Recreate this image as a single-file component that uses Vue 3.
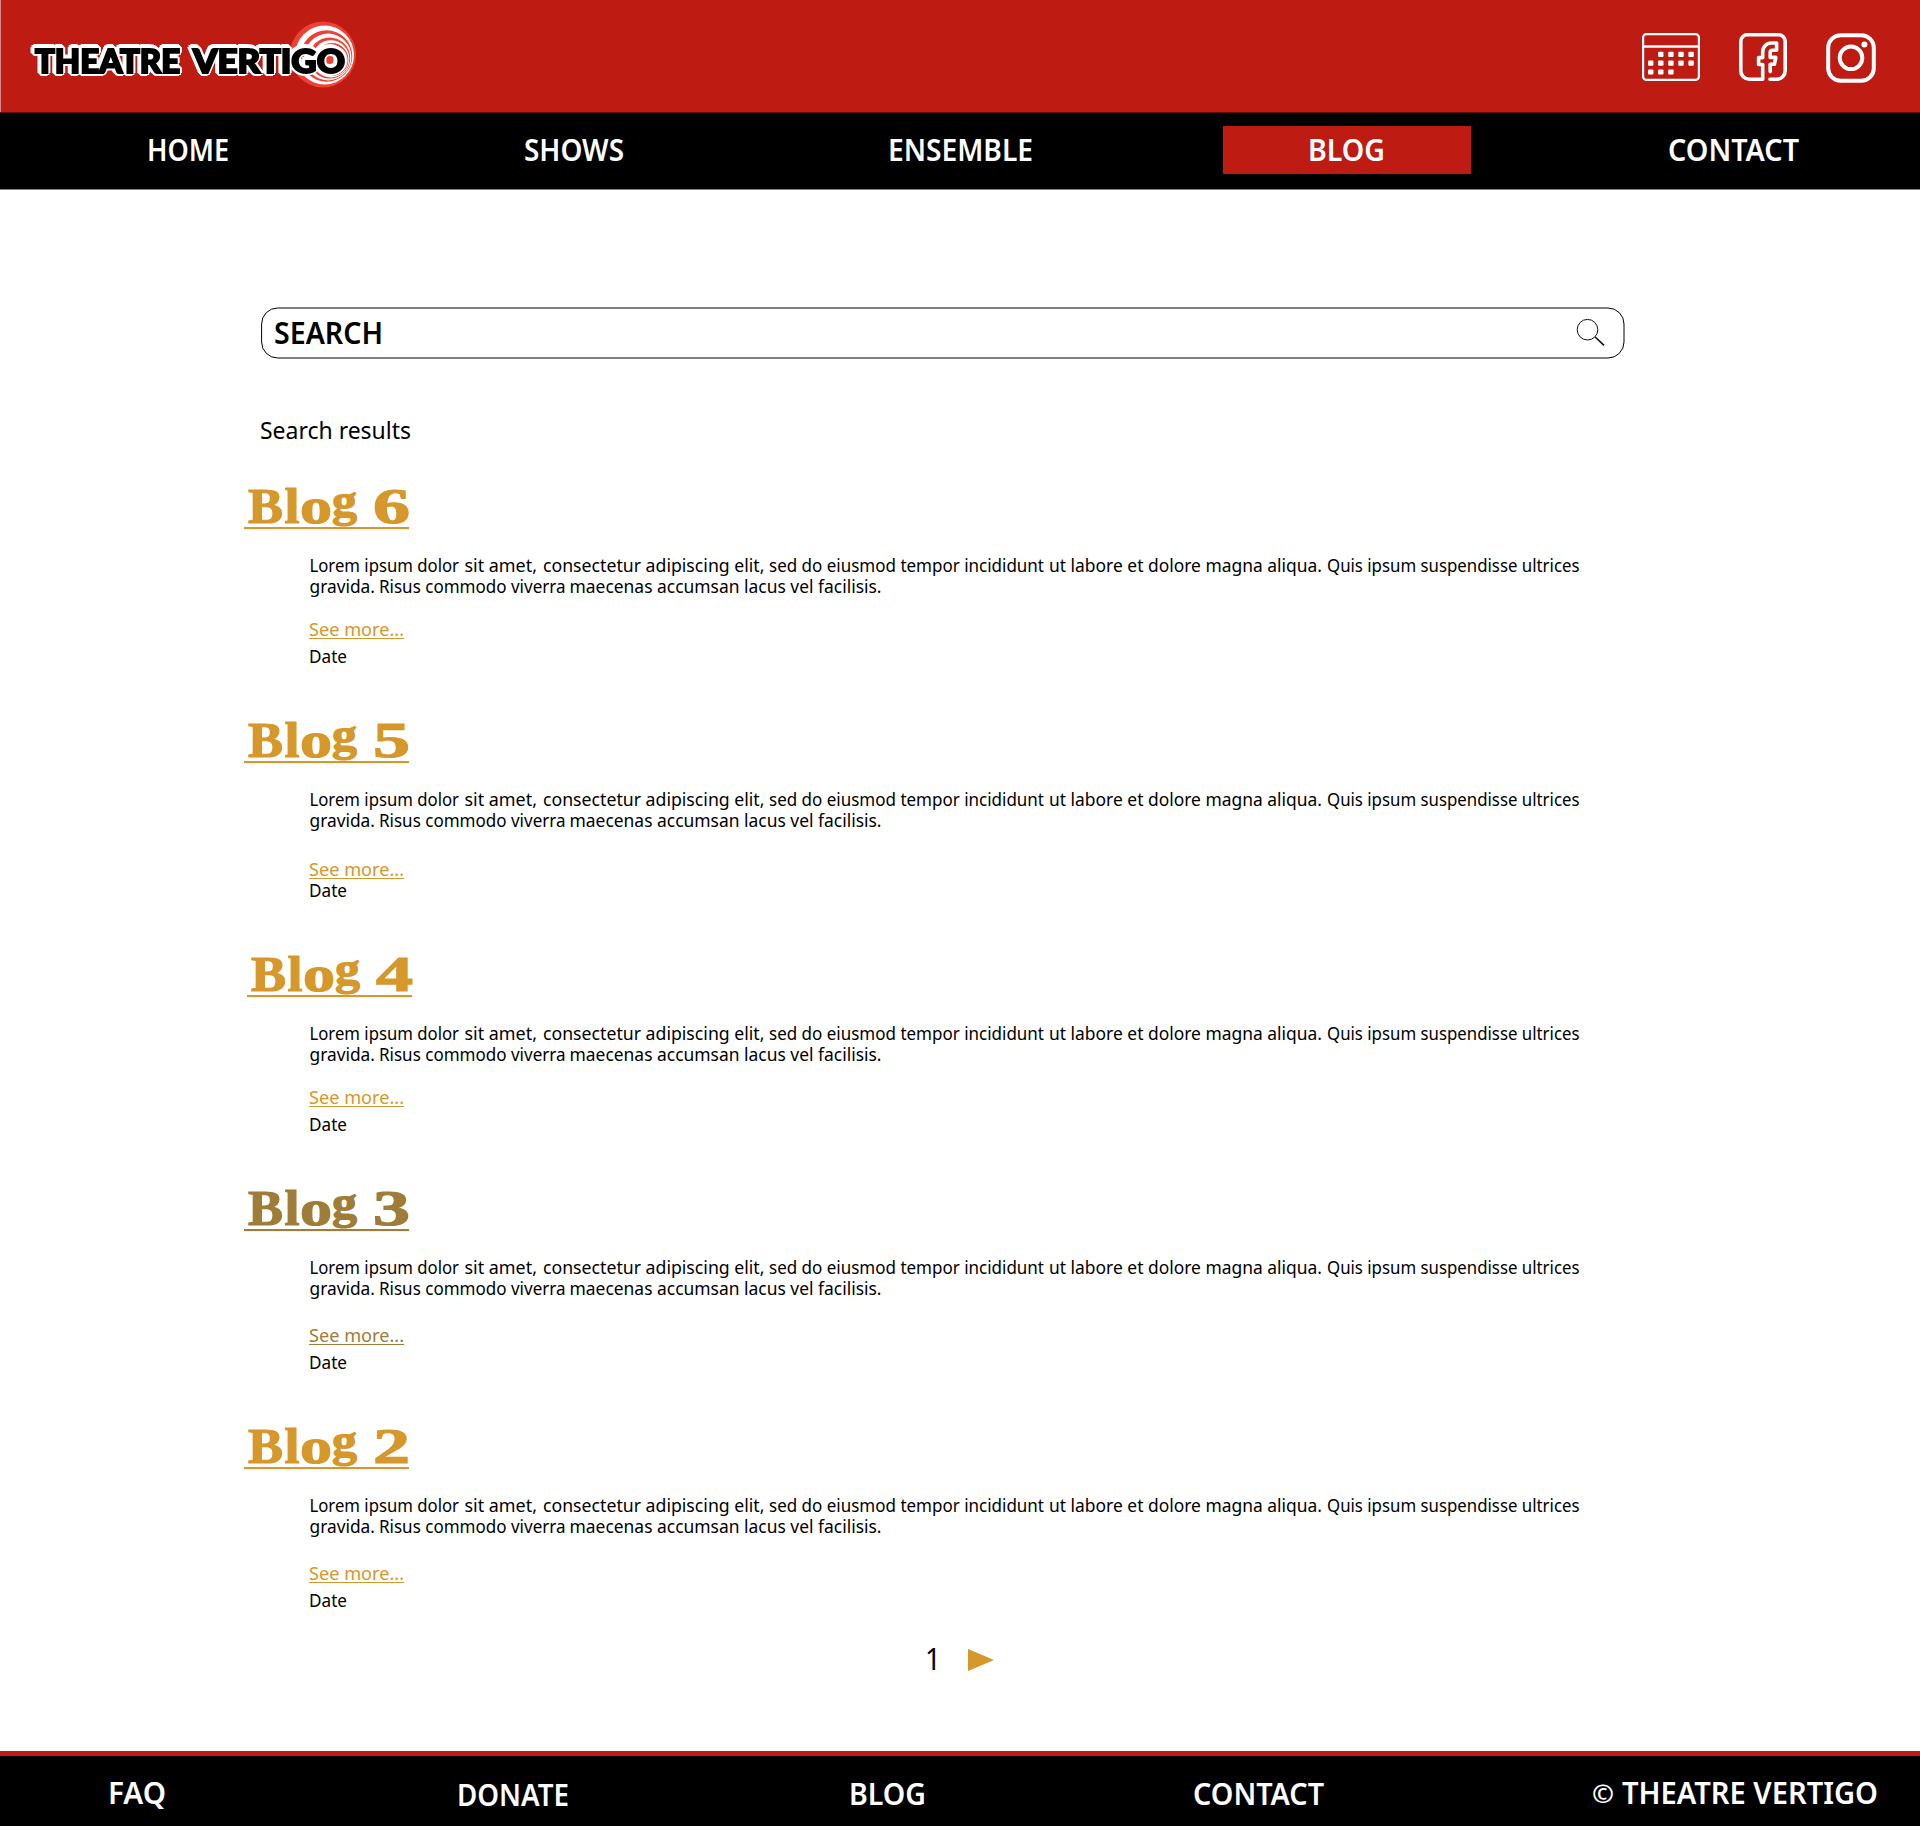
<script setup>
import { h } from 'vue'

// A single line of text fitted to an exact width.
const FitText = (props) =>
  h('svg', { width: props.w, height: props.lh, class: 'fit' }, [
    h(
      'text',
      { x: 0, y: props.base, textLength: props.w, lengthAdjust: 'spacingAndGlyphs' },
      props.text
    )
  ])
FitText.props = ['text', 'w', 'lh', 'base']

const nav = [
  { label: 'HOME', w: 82 },
  { label: 'SHOWS', w: 100 },
  { label: 'ENSEMBLE', w: 145 },
  { label: 'BLOG', w: 77, active: true },
  { label: 'CONTACT', w: 131 }
]

const lineOne = [
  { t: 'Lorem ipsum dolor', x: 0.5, w: 149.5 },
  { t: 'sit amet,', x: 155.5, w: 72.5 },
  { t: 'consectetur adipiscing elit,', x: 234, w: 221.5 },
  { t: 'sed do eiusmod tempor incididunt', x: 460, w: 275 },
  { t: 'ut labore et dolore magna aliqua.', x: 740, w: 273 },
  { t: 'Quis ipsum suspendisse ultrices', x: 1018, w: 252.5 }
]
const lineTwo = [
  { t: 'gravida.', x: 0.5, w: 65.5 },
  { t: 'Risus commodo viverra', x: 70, w: 186.5 },
  { t: 'maecenas accumsan lacus vel facilisis.', x: 260.5, w: 312 }
]

const posts = [
  { n: 6, mod: '' },
  { n: 5, mod: 'tight' },
  { n: 4, mod: 'shifted' },
  { n: 3, mod: 'visited roomy' },
  { n: 2, mod: 'roomy' }
]

const dots = []
for (let r = 0; r < 3; r++)
  for (let c = 0; c < 5; c++)
    if (!(r === 0 && c === 0) && !(r === 2 && c > 2)) dots.push({ x: 6 + c * 10.1, y: 18.8 + r * 8.8 })

const rings = [
  [33, 33.5, 33], [34.6, 34, 29.4], [36.6, 35, 25.7], [38, 36, 23.4], [39.6, 37, 20.6],
  [40.8, 37.8, 18.6], [42, 38.5, 16.4], [43, 39, 14.6], [44, 39.5, 12.6]
]
</script>

<template>
  <div class="page">
    <header class="banner">
      <svg class="logo" width="330" height="76" viewBox="0 0 330 76">
        <g transform="translate(263 3)">
          <circle
            v-for="(r, i) in rings" :key="i"
            :cx="r[0]" :cy="r[1]" :r="r[2]" :fill="i % 2 ? '#fff' : '#ee4034'"
          />
        </g>
        <text class="word" y="54.5">
          <tspan x="8" textLength="145" lengthAdjust="spacingAndGlyphs">THEATRE</tspan>
          <tspan x="166" textLength="152" lengthAdjust="spacingAndGlyphs">VERTIGO</tspan>
        </text>
      </svg>
      <div class="social">
        <svg width="58" height="48" viewBox="0 0 58 48" fill="none" stroke="#fff">
          <rect x="1.1" y="1.1" width="55.8" height="45.8" rx="3.5" stroke-width="2.2" />
          <path d="M1 13.5H57" stroke-width="2.6" />
          <rect v-for="(d, i) in dots" :key="i" :x="d.x" :y="d.y" width="5.4" height="5.2" rx="1" fill="#fff" stroke="none" />
        </svg>
        <svg class="fb" width="48" height="48" viewBox="5 5 48 48" fill="none" stroke="#fff" stroke-width="3.6" stroke-linejoin="round" stroke-linecap="round">
          <path d="M36 51.2H42.7A8.5 8.5 0 0 0 51.2 42.7V13.3A6.5 6.5 0 0 0 44.7 6.8H13.3A6.5 6.5 0 0 0 6.8 13.3V42.7A8.5 8.5 0 0 0 15.3 51.2H28.7V36.5H24.6V29.6H28.7V24C28.7 18.5 32.5 15 37.5 15H42.6V22.2H38.5Q36.2 22.2 36.2 24.5V29.4H41.8L40.4 36.3H36.2V43.6" />
        </svg>
        <svg class="ig" width="50" height="50" viewBox="0 0 50 50" fill="none" stroke="#fff" stroke-width="4">
          <rect x="2.2" y="2.2" width="45.6" height="45.6" rx="12.5" />
          <circle cx="25" cy="24.8" r="11.3" />
          <circle cx="38.4" cy="11.4" r="3" fill="#fff" stroke="none" />
        </svg>
      </div>
    </header>

    <nav class="menu">
      <a v-for="n in nav" :key="n.label" :class="{ active: n.active }">
        <FitText :text="n.label" :w="n.w" :lh="48" :base="35" />
      </a>
    </nav>

    <main>
      <div class="search">
        <svg class="frame" width="1364" height="52" viewBox="0 0 1364 52" fill="none" stroke="#000">
          <rect x="0.6" y="1" width="1362.4" height="50" rx="16" />
        </svg>
        <span class="label"><FitText text="SEARCH" :w="109" :lh="52" :base="37" /></span>
        <svg class="glass" width="30" height="30" viewBox="0 0 30 30" fill="none" stroke="#111">
          <circle cx="11.5" cy="11.7" r="10.3" stroke-width="1" />
          <path d="M19.2 19L28 27.3" stroke-width="1.6" />
        </svg>
      </div>

      <p class="results"><FitText text="Search results" :w="151" :lh="30" :base="22.5" /></p>

      <article v-for="p in posts" :key="p.n" class="post" :class="p.mod">
        <h2>
          <svg width="166" height="50">
            <text lengthAdjust="spacingAndGlyphs"><tspan
              x="4" y="40" textLength="35" lengthAdjust="spacingAndGlyphs">B</tspan><tspan
              x="40.5" y="40" textLength="15" lengthAdjust="spacingAndGlyphs">l</tspan><tspan
              x="56" y="40" textLength="32" lengthAdjust="spacingAndGlyphs">o</tspan><tspan
              class="g" x="88" y="33" textLength="25" lengthAdjust="spacingAndGlyphs">g</tspan><tspan
              class="num" x="129" y="40" textLength="37" lengthAdjust="spacingAndGlyphs">{{ p.n }}</tspan></text>
            <rect x="0" y="44" width="165" height="2.1" />
          </svg>
        </h2>
        <div class="body">
          <svg width="1280" height="42">
            <text y="15">
              <tspan v-for="s in lineOne" :key="s.x" :x="s.x" :textLength="s.w" lengthAdjust="spacingAndGlyphs">{{ s.t }}</tspan>
            </text>
            <text y="36">
              <tspan v-for="s in lineTwo" :key="s.x" :x="s.x" :textLength="s.w" lengthAdjust="spacingAndGlyphs">{{ s.t }}</tspan>
            </text>
          </svg>
          <a class="more"><FitText text="See more..." :w="95" :lh="18" :base="15" /></a>
          <span class="date"><FitText text="Date" :w="38" :lh="21" :base="15" /></span>
        </div>
      </article>

      <div class="pager">
        <FitText text="1" :w="16" :lh="30" :base="25" />
        <svg width="27" height="22"><path d="M0 0L26 11L0 22Z" fill="#d6972b" /></svg>
      </div>
    </main>

    <footer>
      <a class="faq"><FitText text="FAQ" :w="58" :lh="40" :base="28" /></a>
      <a class="donate"><FitText text="DONATE" :w="112" :lh="40" :base="30" /></a>
      <a class="blog"><FitText text="BLOG" :w="77" :lh="40" :base="29" /></a>
      <a class="contact"><FitText text="CONTACT" :w="131" :lh="40" :base="29" /></a>
      <span class="copy">
        <FitText class="mark" text="©" :w="22" :lh="40" :base="27" />
        <FitText text="THEATRE VERTIGO" :w="256" :lh="40" :base="28" />
      </span>
    </footer>
  </div>
</template>

<style>
body { margin: 0; background: #fff; }
svg { display: block; flex: none; overflow: visible; }
.fit text { fill: currentColor; }
</style>

<style scoped>
.page {
  width: 1920px;
  height: 1826px;
  overflow: hidden;
  display: flex;
  flex-direction: column;
  font-family: "Noto Sans", "Open Sans", sans-serif;
  color: #000;
}
.banner {
  box-sizing: border-box;
  flex: none;
  height: 113px;
  background: #be1b13;
  box-shadow: inset 1px 0 #d98a86;
  border-bottom: 1px solid #5f0e0a;
  display: flex;
  justify-content: space-between;
  padding: 18px 44px 0 27px;
}
.word {
  font-family: Lato, sans-serif;
  font-weight: 900;
  font-size: 33px;
  fill: #000;
  stroke: #000;
  stroke-width: 2px;
  filter: drop-shadow(1.2px 1.2px 0 #fff) drop-shadow(-1.2px -1.2px 0 #fff)
    drop-shadow(1.2px -1.2px 0 #fff) drop-shadow(-1.2px 1.2px 0 #fff);
}
.social { display: flex; padding-top: 15px; }
.fb { margin-left: 39px; }
.ig { margin-left: 39px; }
.menu {
  box-sizing: border-box;
  flex: none;
  height: 77px;
  background: #000;
  border-bottom: 1px solid #808080;
  color: #fff;
  display: flex;
  gap: 138.3px;
  padding: 13px 0 0 64px;
  font-size: 30px;
  font-weight: 600;
}
.menu a {
  width: 248px;
  height: 48px;
  display: flex;
  justify-content: center;
}
.menu .active { background: #be1b13; }
main { flex: 1; display: flex; flex-direction: column; }
.search {
  width: 1363px;
  height: 52px;
  margin: 117px 0 0 261px;
  display: grid;
  grid-template-columns: 13px 1fr 46px;
}
.frame { grid-area: 1 / 1 / 2 / 4; }
.label { grid-area: 1 / 2; font-size: 30px; font-weight: 600; }
.glass { grid-area: 1 / 3; margin: 11px 0 0 -3px; }
.results { margin: 57px 0 0 259.5px; font-size: 24px; }
.post { margin: 0 0 48px 243.5px; }
.results + .post { margin-top: 37px; }
h2 { margin: 0; }
h2 text {
  font: bold 51px "Liberation Serif", serif;
  fill: #d6972b;
  stroke: #d6972b;
  stroke-width: 1.2px;
}
h2 rect { fill: #d6972b; }
.num { font-size: 51px; }
.g { font-size: 46px; }
.body {
  margin: 24px 0 0 65.5px;
  font-size: 18px;
  display: flex;
  flex-direction: column;
  align-items: flex-start;
}
.more {
  margin-top: 22px;
  height: 18px;
  box-sizing: border-box;
  border-bottom: 1px solid currentColor;
  color: #d6972b;
}
.date { margin-top: 9px; }
.tight .more { margin-top: 28px; }
.tight .date { margin-top: 3px; }
.roomy .more { margin-top: 26px; }
.shifted h2 { padding-left: 3px; }
.visited h2 text { fill: #9f7c37; stroke: #9f7c37; }
.visited h2 rect { fill: #9f7c37; }
.visited .more { color: #9f7c37; }
.pager {
  display: flex;
  gap: 27px;
  align-items: center;
  margin: -16px 0 0 925px;
  font-size: 30px;
}
footer {
  box-sizing: border-box;
  flex: none;
  height: 75px;
  border-top: 5px solid #be1b13;
  background: #000;
  color: #fff;
  display: flex;
  padding: 20px 0 0 107.5px;
  font-size: 30px;
  font-weight: 600;
}
.donate { margin-left: 291px; }
.blog { margin-left: 280px; }
.contact { margin-left: 267.5px; }
.copy { display: flex; gap: 8px; margin-left: 267.5px; }
.mark { font-size: 26px; }
</style>
